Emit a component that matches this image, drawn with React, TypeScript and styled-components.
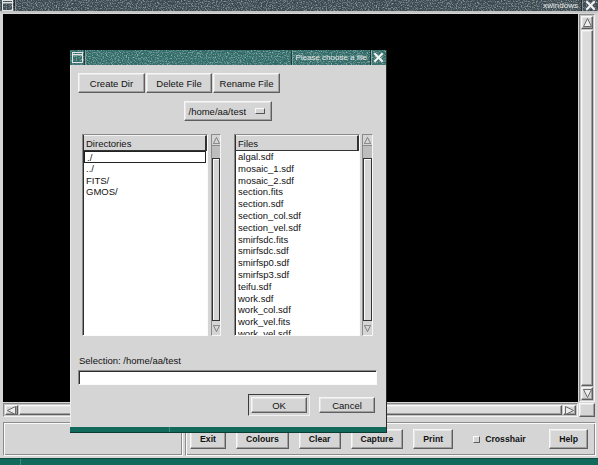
import React from 'react';
import styled, { createGlobalStyle, css } from 'styled-components';

const GRAY = '#d5d5d5';

const Global = createGlobalStyle`
  html, body { margin: 0; padding: 0; background: ${GRAY}; }
  body { font-family: "Liberation Sans", Arial, Helvetica, sans-serif; overflow: hidden; }
  #root { width: 598px; height: 465px; }
  * { box-sizing: border-box; }
`;

const raised = css`
  border: 1px solid;
  border-color: #f7f7f7 #5e5e5e #5e5e5e #f7f7f7;
  box-shadow: inset -1px -1px 0 #a0a0a0, inset 1px 1px 0 #e6e6e6;
`;

const sunken = css`
  border: 1px solid;
  border-color: #8a8a8a #fbfbfb #fbfbfb #8a8a8a;
  box-shadow: inset 1px 1px 0 #2e2e2e;
`;

const etched = css`
  border: 1px solid;
  border-color: #8c8c8c #fafafa #fafafa #8c8c8c;
  box-shadow: inset 1px 1px 0 #fafafa, inset -1px -1px 0 #8c8c8c;
`;

/* ---------- Screen ---------- */
const Screen = styled.div`
  position: relative;
  width: 598px;
  height: 465px;
  background: ${GRAY};
  display: flex;
  flex-direction: column;
  overflow: hidden;
`;

/* ---------- Title bars ---------- */
const TitleBar = styled.div<{ $h: number; $line?: boolean }>`
  position: relative;
  flex: none;
  height: ${p => p.$h}px;
  display: flex;
  align-items: stretch;
  ${p => p.$line && css`border-bottom: 2px solid #c4c4c4;`}
`;

const TextureSvg = styled.svg`
  position: absolute;
  inset: 0;
  width: 100%;
  height: 100%;
`;

const BarIcon = styled.div`
  position: relative;
  z-index: 1;
  width: 15px;
  display: flex;
  align-items: center;
  justify-content: center;
  border-right: 1px solid rgba(0, 0, 0, 0.5);
  box-shadow: 1px 0 0 rgba(255, 255, 255, 0.3);
`;

const BarSpacer = styled.div`
  flex: 1;
`;

const BarLabel = styled.div<{ $sep?: boolean }>`
  position: relative;
  z-index: 1;
  display: flex;
  align-items: center;
  padding: 0 3px;
  font-size: 8px;
  color: #e8e8e8;
  white-space: nowrap;
  ${p =>
    p.$sep &&
    css`
      border-left: 1px solid rgba(0, 0, 0, 0.5);
      box-shadow: inset 1px 0 0 rgba(255, 255, 255, 0.3);
    `}
`;

const BarClose = styled.div<{ $w: number }>`
  position: relative;
  z-index: 1;
  width: ${p => p.$w}px;
  display: flex;
  align-items: center;
  justify-content: center;
  border-left: 1px solid rgba(0, 0, 0, 0.55);
  box-shadow: inset 1px 0 0 rgba(255, 255, 255, 0.35);
`;

const Texture: React.FC<{ id: string; base: string; speck: string }> = ({ id, base, speck }) => (
  <TextureSvg preserveAspectRatio="none">
    <defs>
      <filter id={id} x="0" y="0" width="100%" height="100%" colorInterpolationFilters="sRGB">
        <feTurbulence type="fractalNoise" baseFrequency="0.8" numOctaves="2" seed="7" />
        <feColorMatrix type="matrix" values="0 0 0 0 1  0 0 0 0 1  0 0 0 0 1  2.6 0 0 0 -1.15" />
      </filter>
    </defs>
    <rect width="100%" height="100%" fill={base} />
    <rect width="100%" height="100%" fill={speck} filter={`url(#${id})`} opacity="0.5" />
  </TextureSvg>
);

const WinIcon = () => (
  <svg width="11" height="11" viewBox="0 0 11 11">
    <rect x="0.5" y="0.5" width="10" height="10" fill="none" stroke="#e4e4e4" />
    <rect x="1" y="2" width="9" height="1.4" fill="#e4e4e4" />
  </svg>
);

const CloseX: React.FC<{ s: number }> = ({ s }) => (
  <svg width={s} height={s} viewBox="0 0 10 10">
    <path d="M1.2 1.2 L8.8 8.8 M8.8 1.2 L1.2 8.8" stroke="#f2f2f2" strokeWidth="2" />
  </svg>
);

/* ---------- Workspace ---------- */
const Workspace = styled.div`
  flex: 1;
  display: grid;
  grid-template-columns: 1fr 16px;
  grid-template-rows: 1fr 14px;
  column-gap: 1px;
  row-gap: 1px;
  padding: 1px 3px 0 3px;
  min-height: 0;
`;

const Canvas = styled.div`
  background: #000;
`;

const ScrollBar = styled.div<{ $dir: 'v' | 'h' }>`
  display: flex;
  flex-direction: ${p => (p.$dir === 'v' ? 'column' : 'row')};
  border: 1px solid;
  border-color: #8a8a8a #f4f4f4 #f4f4f4 #8a8a8a;
  padding: 1px;
  gap: 1px;
  background: #c6c6c6;
`;

const ArrowBox = styled.div<{ $len: number; $dir: 'v' | 'h' }>`
  flex: none;
  ${p => (p.$dir === 'v' ? `height: ${p.$len}px;` : `width: ${p.$len}px;`)}
  display: flex;
  align-items: center;
  justify-content: center;
  background: ${GRAY};
  ${raised}
`;

const Thumb = styled.div`
  flex: 1;
  background: #dcdcdc;
  ${raised}
`;

const Corner = styled.div`
  background: ${GRAY};
  ${raised}
`;

const Tri: React.FC<{ d: 'up' | 'down' | 'left' | 'right'; s?: number; fill?: string }> = ({ d, s = 9, fill = '#ececec' }) => {
  const pts = {
    up: '4.5,0.5 8.5,8.5 0.5,8.5',
    down: '0.5,0.5 8.5,0.5 4.5,8.5',
    left: '0.5,4.5 8.5,0.5 8.5,8.5',
    right: '0.5,0.5 8.5,4.5 0.5,8.5',
  }[d];
  return (
    <svg width={s} height={s} viewBox="0 0 9 9">
      <polygon points={pts} fill={fill} stroke="#6a6a6a" strokeWidth="1" />
    </svg>
  );
};

/* ---------- Bottom panel ---------- */
const BottomPanel = styled.div`
  flex: none;
  height: 41px;
  padding: 5px 2px 2px 3px;
  display: flex;
  gap: 2px;
`;

const Frame = styled.div<{ $w?: number }>`
  ${p => (p.$w ? `width: ${p.$w}px; flex: none;` : 'flex: 1;')}
  ${etched}
  display: flex;
  align-items: center;
  padding: 0 7px 0 4px;
  gap: 10px;
`;

const PanelButton = styled.button<{ $push?: boolean }>`
  height: 20px;
  padding: 0 9px;
  background: ${GRAY};
  ${raised}
  font-family: "Liberation Sans", Arial, sans-serif;
  font-weight: bold;
  font-size: 8.7px;
  color: #111;
  ${p => p.$push && 'margin-left: auto;'}
`;

const Check = styled.label`
  display: flex;
  align-items: center;
  gap: 5px;
  margin-left: 10px;
  font-weight: bold;
  font-size: 8.7px;
  color: #111;
`;

const CheckBox = styled.span`
  width: 7px;
  height: 7px;
  background: ${GRAY};
  border: 1px solid;
  border-color: #fafafa #5e5e5e #5e5e5e #fafafa;
`;

const TealStrip = styled.div`
  flex: none;
  height: 7px;
  background: #116a5b;
  border-top: 1px solid #0b4a40;
  display: flex;
`;

const StripSep = styled.div<{ $w: number }>`
  width: ${p => p.$w}px;
  border-right: 1px solid #3f8c7e;
`;

/* ---------- Dialog ---------- */
const Dialog = styled.div`
  position: absolute;
  left: 70px;
  top: 50px;
  width: 317px;
  height: 383px;
  display: flex;
  flex-direction: column;
  background: ${GRAY};
  border-right: 1px solid #2a2a2a;
`;

const DialogBody = styled.div`
  flex: 1;
  display: flex;
  flex-direction: column;
  padding: 8px 9px 0 8px;
  box-shadow: inset 1px 0 0 #ececec;
`;

const DialogFoot = styled.div`
  flex: none;
  height: 6px;
  background: #116a5b;
  border-bottom: 1px solid #0a3c34;
  display: flex;
`;

const ButtonRow = styled.div`
  display: flex;
  gap: 1px;
`;

const DlgButton = styled.button<{ $w: number; $h?: number }>`
  width: ${p => p.$w}px;
  height: ${p => p.$h ?? 20}px;
  padding: 0;
  background: ${GRAY};
  ${raised}
  font-family: "Liberation Sans", Arial, sans-serif;
  font-size: 9.5px;
  color: #111;
`;

const DropRow = styled.div`
  display: flex;
  justify-content: center;
  margin-top: 8px;
`;

const Dropdown = styled.div`
  width: 88px;
  height: 20px;
  display: flex;
  align-items: center;
  justify-content: space-between;
  padding: 0 6px 0 4px;
  background: ${GRAY};
  ${raised}
  font-size: 9.5px;
  color: #111;
`;

const DropMark = styled.span`
  width: 10px;
  height: 6px;
  background: ${GRAY};
  border: 1px solid;
  border-color: #fafafa #555 #555 #fafafa;
`;

const ListsRow = styled.div`
  display: flex;
  margin: 13px 0 0 4px;
  height: 202px;
`;

const ListBox = styled.div<{ $ml?: number }>`
  width: 126px;
  flex: none;
  margin-left: ${p => p.$ml ?? 0}px;
  display: flex;
  flex-direction: column;
  background: #fff;
  ${sunken}
  overflow: hidden;
`;

const ListHeader = styled.div`
  flex: none;
  height: 16px;
  display: flex;
  align-items: center;
  padding-left: 2px;
  margin-left: 1px;
  background: ${GRAY};
  border-top: 1px solid #f4f4f4;
  border-right: 2px solid #333;
  border-bottom: 1px solid #333;
  font-size: 9.5px;
  color: #111;
`;

const ListRows = styled.div`
  flex: 1;
  overflow: hidden;
`;

const Row = styled.div<{ $sel?: boolean }>`
  height: 11.8px;
  line-height: 11px;
  padding-left: 3px;
  font-size: 9.5px;
  color: #111;
  white-space: nowrap;
  ${p =>
    p.$sel &&
    css`
      margin: 0 1px;
      padding-left: 2px;
      border: 1px solid #222;
    `}
`;

const LScroll = styled.div<{ $w: number; $ml: number }>`
  width: ${p => p.$w}px;
  flex: none;
  margin-left: ${p => p.$ml}px;
  display: flex;
  flex-direction: column;
  border: 1px solid;
  border-color: #8a8a8a #f6f6f6 #f6f6f6 #8a8a8a;
  background: ${GRAY};
`;

const LArrow = styled.div<{ $h: number }>`
  flex: none;
  height: ${p => p.$h}px;
  display: flex;
  align-items: center;
  justify-content: center;
`;

const LTrough = styled.div`
  flex: none;
  height: 13px;
  background: #bdbdbd;
  border-top: 1px solid #8a8a8a;
`;

const LThumb = styled.div`
  flex: 1;
  background: ${GRAY};
  border: 1px solid #333;
  box-shadow: inset 1px 1px 0 #fafafa;
`;

const SelLabel = styled.div`
  margin: 19px 0 0 1px;
  height: 12px;
  line-height: 12px;
  font-size: 9.5px;
  color: #111;
`;

const TextInput = styled.div`
  margin-top: 3px;
  height: 15px;
  background: #fff;
  ${sunken}
`;

const ActionRow = styled.div`
  display: flex;
  justify-content: flex-end;
  align-items: center;
  gap: 9px;
  margin-top: 9px;
  padding-right: 2px;
`;

const DefaultRing = styled.div`
  padding: 2px;
  border: 1px solid;
  border-color: #3c3c3c #f0f0f0 #f0f0f0 #3c3c3c;
  display: flex;
`;

const dirs = ['./', '../', 'FITS/', 'GMOS/'];
const files = [
  'algal.sdf',
  'mosaic_1.sdf',
  'mosaic_2.sdf',
  'section.fits',
  'section.sdf',
  'section_col.sdf',
  'section_vel.sdf',
  'smirfsdc.fits',
  'smirfsdc.sdf',
  'smirfsp0.sdf',
  'smirfsp3.sdf',
  'teifu.sdf',
  'work.sdf',
  'work_col.sdf',
  'work_vel.fits',
  'work_vel.sdf',
];

const ListScroll: React.FC<{ w: number; ml: number }> = ({ w, ml }) => (
  <LScroll $w={w} $ml={ml}>
    <LArrow $h={10}>
      <Tri d="up" s={7} fill="none" />
    </LArrow>
    <LTrough />
    <LThumb />
    <LArrow $h={14}>
      <Tri d="down" s={7} fill="none" />
    </LArrow>
  </LScroll>
);

export default function App() {
  return (
    <Screen>
      <Global />
      <TitleBar $h={13} $line>
        <Texture id="tmain" base="#3a4950" speck="#a8c4c4" />
        <BarIcon>
          <WinIcon />
        </BarIcon>
        <BarSpacer />
        <BarLabel>xwindows</BarLabel>
        <BarClose $w={17}>
          <CloseX s={11} />
        </BarClose>
      </TitleBar>

      <Workspace>
        <Canvas />
        <ScrollBar $dir="v">
          <ArrowBox $dir="v" $len={13}>
            <Tri d="up" />
          </ArrowBox>
          <Thumb />
          <ArrowBox $dir="v" $len={13}>
            <Tri d="down" />
          </ArrowBox>
        </ScrollBar>
        <ScrollBar $dir="h">
          <ArrowBox $dir="h" $len={13}>
            <Tri d="left" />
          </ArrowBox>
          <Thumb />
          <ArrowBox $dir="h" $len={13}>
            <Tri d="right" />
          </ArrowBox>
        </ScrollBar>
        <Corner />
      </Workspace>

      <BottomPanel>
        <Frame $w={180} />
        <Frame>
          <PanelButton>Exit</PanelButton>
          <PanelButton>Colours</PanelButton>
          <PanelButton>Clear</PanelButton>
          <PanelButton>Capture</PanelButton>
          <PanelButton>Print</PanelButton>
          <Check>
            <CheckBox />
            Crosshair
          </Check>
          <PanelButton $push>Help</PanelButton>
        </Frame>
      </BottomPanel>
      <TealStrip>
        <StripSep $w={21} />
      </TealStrip>

      <Dialog>
        <TitleBar $h={15}>
          <Texture id="tdlg" base="#2f6a67" speck="#a8d4cc" />
          <BarIcon>
            <WinIcon />
          </BarIcon>
          <BarSpacer />
          <BarLabel $sep>Please choose a file</BarLabel>
          <BarClose $w={16}>
            <CloseX s={11} />
          </BarClose>
        </TitleBar>
        <DialogBody>
          <ButtonRow>
            <DlgButton $w={67}>Create Dir</DlgButton>
            <DlgButton $w={66}>Delete File</DlgButton>
            <DlgButton $w={67}>Rename File</DlgButton>
          </ButtonRow>
          <DropRow>
            <Dropdown>
              <span>/home/aa/test</span>
              <DropMark />
            </Dropdown>
          </DropRow>
          <ListsRow>
            <ListBox>
              <ListHeader>Directories</ListHeader>
              <ListRows>
                {dirs.map((d, i) => (
                  <Row key={d} $sel={i === 0}>
                    {d}
                  </Row>
                ))}
              </ListRows>
            </ListBox>
            <ListScroll w={10} ml={3} />
            <ListBox $ml={13}>
              <ListHeader>Files</ListHeader>
              <ListRows>
                {files.map(f => (
                  <Row key={f}>{f}</Row>
                ))}
              </ListRows>
            </ListBox>
            <ListScroll w={11} ml={2} />
          </ListsRow>
          <SelLabel>Selection: /home/aa/test</SelLabel>
          <TextInput />
          <ActionRow>
            <DefaultRing>
              <DlgButton $w={56} $h={16}>OK</DlgButton>
            </DefaultRing>
            <DlgButton $w={56} $h={16}>Cancel</DlgButton>
          </ActionRow>
        </DialogBody>
        <DialogFoot>
          <StripSep $w={100} />
        </DialogFoot>
      </Dialog>
    </Screen>
  );
}
